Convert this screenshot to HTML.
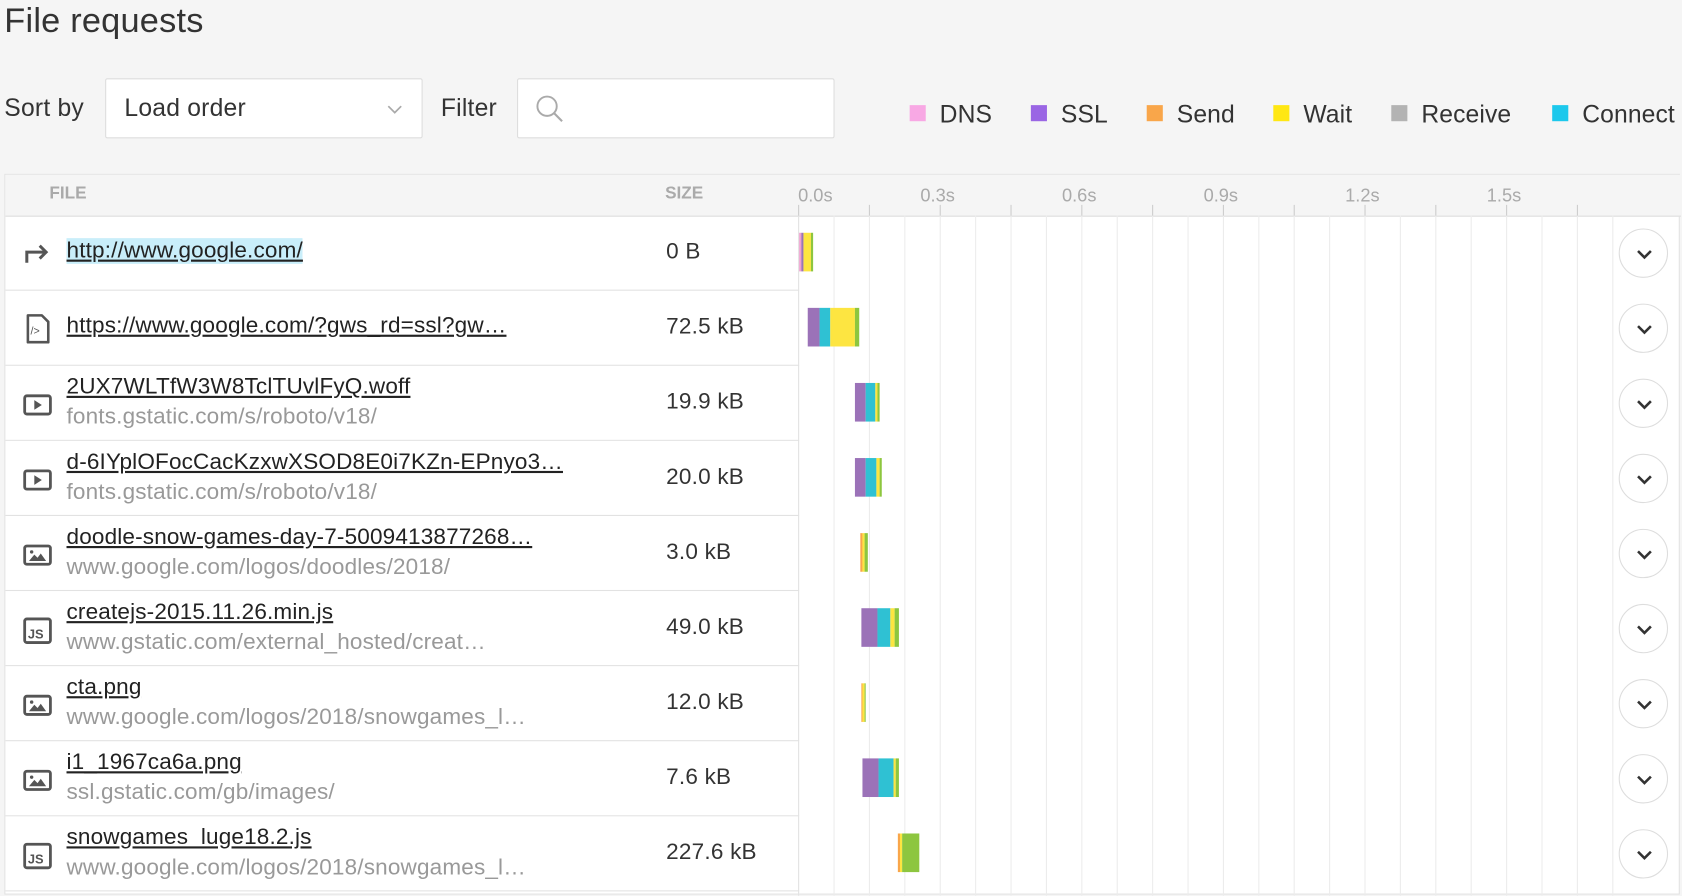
<!DOCTYPE html>
<html><head><meta charset="utf-8"><style>
html,body{margin:0;padding:0;width:1682px;height:894px;overflow:hidden;background:#f5f5f5;}
#w{position:absolute;left:0;top:0;width:1568px;height:834px;transform:scale(1.07270);transform-origin:0 0;font-family:"Liberation Sans",sans-serif;color:#333;}
.a{position:absolute;}
h1{position:absolute;left:4px;top:1px;margin:0;font-weight:normal;font-size:32px;color:#333;letter-spacing:0.2px;}
.lbl{font-size:23px;color:#333;letter-spacing:0.2px;}
.box{background:#fff;border:1px solid #ddd;border-radius:2px;box-sizing:border-box;}
.lg{position:absolute;top:93px;font-size:23px;color:#333;letter-spacing:0.1px;}
.lg i{display:inline-block;width:15px;height:15px;vertical-align:1px;margin-right:13px;}
.tbl{position:absolute;left:4px;top:162px;width:1562px;height:672px;background:#fff;border:1px solid #e2e2e2;box-sizing:border-box;}
.hdr{position:absolute;left:0;top:0;width:1562px;height:38px;background:#f5f5f5;border-bottom:1px solid #ddd;}
.hdr span{position:absolute;top:9px;font-size:16px;color:#aaa;font-weight:bold;letter-spacing:0;}
.tl{position:absolute;top:10px;font-size:17px;color:#aaa;}
.row{position:absolute;left:0;width:1562px;height:70px;}
.rowl{position:absolute;left:0;width:740px;height:70px;border-bottom:1px solid #e2e2e2;box-sizing:border-box;}
.fn{position:absolute;left:57px;font-size:21px;color:#222;text-decoration:underline;letter-spacing:0.15px;white-space:nowrap;}
.sub{position:absolute;left:57px;font-size:21px;color:#999;letter-spacing:0.15px;white-space:nowrap;}
.sz{position:absolute;left:616px;font-size:21px;color:#333;letter-spacing:0.2px;}
.ic{position:absolute;left:16px;}
.bar{position:absolute;height:36px;display:flex;}
.bar b{display:block;height:100%;}
.btn{position:absolute;left:1504px;width:46px;height:46px;border:1.5px solid #ddd;border-radius:50%;background:#fff;box-sizing:border-box;}
.vl{position:absolute;top:38px;width:1px;height:634px;background:#ececec;}
</style></head><body><div id="w">
<h1>File requests</h1>
<div class="a lbl" style="left:4px;top:87px">Sort by</div>
<div class="a box" style="left:98px;top:73px;width:296px;height:56px"></div>
<div class="a lbl" style="left:116px;top:87px">Load order</div>
<svg class="a" style="left:360px;top:96px" width="16" height="12"><path d="M2 3 L8 9 L14 3" fill="none" stroke="#aaa" stroke-width="1.6"/></svg>
<div class="a lbl" style="left:411px;top:87px">Filter</div>
<div class="a box" style="left:482px;top:73px;width:296px;height:56px"></div>
<svg class="a" style="left:498px;top:87px" width="30" height="30"><circle cx="12" cy="12" r="9" fill="none" stroke="#aaa" stroke-width="1.8"/><path d="M18.5 18.5 L26 26" stroke="#aaa" stroke-width="2"/></svg>
<div class="lg" style="left:848px"><i style="background:#f8a8e4"></i>DNS</div>
<div class="lg" style="left:961px"><i style="background:#9a66e4"></i>SSL</div>
<div class="lg" style="left:1069px"><i style="background:#f9a64a"></i>Send</div>
<div class="lg" style="left:1187px"><i style="background:#ffe713"></i>Wait</div>
<div class="lg" style="left:1297px"><i style="background:#b3b3b3"></i>Receive</div>
<div class="lg" style="left:1447px"><i style="background:#1cc8ec"></i>Connect</div>

<div class="tbl">
<div class="hdr">
<span style="left:41px">FILE</span><span style="left:615px">SIZE</span>
</div>
<div class="vl" style="left:772px"></div><div class="vl" style="left:805px"></div><div class="vl" style="left:838px"></div><div class="vl" style="left:871px"></div><div class="vl" style="left:904px"></div><div class="vl" style="left:937px"></div><div class="vl" style="left:970px"></div><div class="vl" style="left:1003px"></div><div class="vl" style="left:1036px"></div><div class="vl" style="left:1069px"></div><div class="vl" style="left:1102px"></div><div class="vl" style="left:1135px"></div><div class="vl" style="left:1168px"></div><div class="vl" style="left:1201px"></div><div class="vl" style="left:1234px"></div><div class="vl" style="left:1267px"></div><div class="vl" style="left:1300px"></div><div class="vl" style="left:1333px"></div><div class="vl" style="left:1366px"></div><div class="vl" style="left:1399px"></div><div class="vl" style="left:1432px"></div><div class="vl" style="left:1465px"></div><div class="vl" style="left:1498px"></div>
<div class="vl" style="left:739px;background:#e2e2e2"></div>
<div class="tl" style="left:739px">0.0s</div><div class="tl" style="left:853px">0.3s</div><div class="tl" style="left:985px">0.6s</div><div class="tl" style="left:1117px">0.9s</div><div class="tl" style="left:1249px">1.2s</div><div class="tl" style="left:1381px">1.5s</div>
<div class="a" style="left:739px;top:28px;width:1px;height:10px;background:#ccc"></div><div class="a" style="left:805px;top:28px;width:1px;height:10px;background:#ccc"></div><div class="a" style="left:871px;top:28px;width:1px;height:10px;background:#ccc"></div><div class="a" style="left:937px;top:28px;width:1px;height:10px;background:#ccc"></div><div class="a" style="left:1003px;top:28px;width:1px;height:10px;background:#ccc"></div><div class="a" style="left:1069px;top:28px;width:1px;height:10px;background:#ccc"></div><div class="a" style="left:1135px;top:28px;width:1px;height:10px;background:#ccc"></div><div class="a" style="left:1201px;top:28px;width:1px;height:10px;background:#ccc"></div><div class="a" style="left:1267px;top:28px;width:1px;height:10px;background:#ccc"></div><div class="a" style="left:1333px;top:28px;width:1px;height:10px;background:#ccc"></div><div class="a" style="left:1399px;top:28px;width:1px;height:10px;background:#ccc"></div><div class="a" style="left:1465px;top:28px;width:1px;height:10px;background:#ccc"></div>

<div class="row" style="top:38px">
<div class="rowl"></div>
<svg class="ic" style="top:24px" width="28" height="22"><path d="M4 20 V10 H21" fill="none" stroke="#555" stroke-width="2.8"/><path d="M16 4 L22 10 L16 16" fill="none" stroke="#555" stroke-width="2.8"/></svg>
<div class="fn" style="top:21px;background:#c9eefa">http://www.google.com/</div>
<div class="sz" style="top:22px">0 B</div>
<div class="bar" style="left:740px;top:16px"><b style="width:2px;background:#f0a0d0"></b><b style="width:2px;background:#9b72b8"></b><b style="width:7px;background:#fde541"></b><b style="width:2px;background:#8dc63f"></b></div>
<div class="btn" style="top:12px"></div>
</div>
<div class="row" style="top:108px">
<div class="rowl"></div>
<svg class="ic" style="top:21px" width="28" height="30"><path d="M5 2 H18 L24 8 V27 H5 Z" fill="none" stroke="#555" stroke-width="2.4" stroke-linejoin="round"/><text x="7.5" y="20" font-size="10" font-family="Liberation Sans" fill="#555">/&gt;</text></svg>
<div class="fn" style="top:21px">https://www.google.com/?gws_rd=ssl?gw…</div>
<div class="sz" style="top:22px">72.5 kB</div>
<div class="bar" style="left:748px;top:16px"><b style="width:11px;background:#9b72b8"></b><b style="width:10px;background:#2fc1d3"></b><b style="width:23px;background:#fde541"></b><b style="width:4px;background:#8dc63f"></b></div>
<div class="btn" style="top:12px"></div>
</div>
<div class="row" style="top:178px">
<div class="rowl"></div>
<svg class="ic" style="top:26px" width="28" height="22"><rect x="2" y="2" width="24" height="17" rx="2" fill="none" stroke="#555" stroke-width="2.6"/><path d="M11 6 L18 10.5 L11 15 Z" fill="#555"/></svg>
<div class="fn" style="top:8px">2UX7WLTfW3W8TclTUvlFyQ.woff</div>
<div class="sub" style="top:36px">fonts.gstatic.com/s/roboto/v18/</div>
<div class="sz" style="top:22px">19.9 kB</div>
<div class="bar" style="left:792px;top:16px"><b style="width:10px;background:#9b72b8"></b><b style="width:9px;background:#2fc1d3"></b><b style="width:2px;background:#fde541"></b><b style="width:2px;background:#8dc63f"></b></div>
<div class="btn" style="top:12px"></div>
</div>
<div class="row" style="top:248px">
<div class="rowl"></div>
<svg class="ic" style="top:26px" width="28" height="22"><rect x="2" y="2" width="24" height="17" rx="2" fill="none" stroke="#555" stroke-width="2.6"/><path d="M11 6 L18 10.5 L11 15 Z" fill="#555"/></svg>
<div class="fn" style="top:8px">d-6IYplOFocCacKzxwXSOD8E0i7KZn-EPnyo3…</div>
<div class="sub" style="top:36px">fonts.gstatic.com/s/roboto/v18/</div>
<div class="sz" style="top:22px">20.0 kB</div>
<div class="bar" style="left:792px;top:16px"><b style="width:10px;background:#9b72b8"></b><b style="width:10px;background:#2fc1d3"></b><b style="width:3px;background:#fde541"></b><b style="width:2px;background:#8dc63f"></b></div>
<div class="btn" style="top:12px"></div>
</div>
<div class="row" style="top:318px">
<div class="rowl"></div>
<svg class="ic" style="top:26px" width="28" height="22"><rect x="2" y="2" width="24" height="17" rx="2" fill="none" stroke="#555" stroke-width="2.6"/><path d="M6 16 L11 10 L14 13 L17 9 L22 16 Z" fill="#555"/><circle cx="8.5" cy="7.5" r="1.6" fill="#555"/></svg>
<div class="fn" style="top:8px">doodle-snow-games-day-7-5009413877268…</div>
<div class="sub" style="top:36px">www.google.com/logos/doodles/2018/</div>
<div class="sz" style="top:22px">3.0 kB</div>
<div class="bar" style="left:797px;top:16px"><b style="width:2px;background:#f9a64a"></b><b style="width:2px;background:#fde541"></b><b style="width:3px;background:#8dc63f"></b></div>
<div class="btn" style="top:12px"></div>
</div>
<div class="row" style="top:388px">
<div class="rowl"></div>
<svg class="ic" style="top:24px" width="28" height="26"><rect x="2" y="2" width="24" height="22" rx="2" fill="none" stroke="#555" stroke-width="2.6"/><text x="5" y="20" font-size="12" font-weight="bold" font-family="Liberation Sans" fill="#555">JS</text></svg>
<div class="fn" style="top:8px">createjs-2015.11.26.min.js</div>
<div class="sub" style="top:36px">www.gstatic.com/external_hosted/creat…</div>
<div class="sz" style="top:22px">49.0 kB</div>
<div class="bar" style="left:798px;top:16px"><b style="width:15px;background:#9b72b8"></b><b style="width:12px;background:#2fc1d3"></b><b style="width:4px;background:#fde541"></b><b style="width:4px;background:#8dc63f"></b></div>
<div class="btn" style="top:12px"></div>
</div>
<div class="row" style="top:458px">
<div class="rowl"></div>
<svg class="ic" style="top:26px" width="28" height="22"><rect x="2" y="2" width="24" height="17" rx="2" fill="none" stroke="#555" stroke-width="2.6"/><path d="M6 16 L11 10 L14 13 L17 9 L22 16 Z" fill="#555"/><circle cx="8.5" cy="7.5" r="1.6" fill="#555"/></svg>
<div class="fn" style="top:8px">cta.png</div>
<div class="sub" style="top:36px">www.google.com/logos/2018/snowgames_l…</div>
<div class="sz" style="top:22px">12.0 kB</div>
<div class="bar" style="left:798px;top:16px"><b style="width:1px;background:#f9a64a"></b><b style="width:2px;background:#fde541"></b><b style="width:1px;background:#8dc63f"></b></div>
<div class="btn" style="top:12px"></div>
</div>
<div class="row" style="top:528px">
<div class="rowl"></div>
<svg class="ic" style="top:26px" width="28" height="22"><rect x="2" y="2" width="24" height="17" rx="2" fill="none" stroke="#555" stroke-width="2.6"/><path d="M6 16 L11 10 L14 13 L17 9 L22 16 Z" fill="#555"/><circle cx="8.5" cy="7.5" r="1.6" fill="#555"/></svg>
<div class="fn" style="top:8px">i1_1967ca6a.png</div>
<div class="sub" style="top:36px">ssl.gstatic.com/gb/images/</div>
<div class="sz" style="top:22px">7.6 kB</div>
<div class="bar" style="left:799px;top:16px"><b style="width:15px;background:#9b72b8"></b><b style="width:14px;background:#2fc1d3"></b><b style="width:2px;background:#fde541"></b><b style="width:3px;background:#8dc63f"></b></div>
<div class="btn" style="top:12px"></div>
</div>
<div class="row" style="top:598px">
<div class="rowl"></div>
<svg class="ic" style="top:24px" width="28" height="26"><rect x="2" y="2" width="24" height="22" rx="2" fill="none" stroke="#555" stroke-width="2.6"/><text x="5" y="20" font-size="12" font-weight="bold" font-family="Liberation Sans" fill="#555">JS</text></svg>
<div class="fn" style="top:8px">snowgames_luge18.2.js</div>
<div class="sub" style="top:36px">www.google.com/logos/2018/snowgames_l…</div>
<div class="sz" style="top:22px">227.6 kB</div>
<div class="bar" style="left:832px;top:16px"><b style="width:2px;background:#f9a64a"></b><b style="width:2px;background:#fde541"></b><b style="width:16px;background:#8dc63f"></b></div>
<div class="btn" style="top:12px"></div>
</div>
</div>
<svg class="a" style="left:1508px;top:162px" width="50" height="672">
<g fill="none" stroke="#333" stroke-width="2.4">
<path d="M19 72 L25 78 L31 72"/><path d="M19 142 L25 148 L31 142"/><path d="M19 212 L25 218 L31 212"/><path d="M19 282 L25 288 L31 282"/><path d="M19 352 L25 358 L31 352"/><path d="M19 422 L25 428 L31 422"/><path d="M19 492 L25 498 L31 492"/><path d="M19 562 L25 568 L31 562"/><path d="M19 632 L25 638 L31 632"/>
</g></svg>
</div></body></html>
